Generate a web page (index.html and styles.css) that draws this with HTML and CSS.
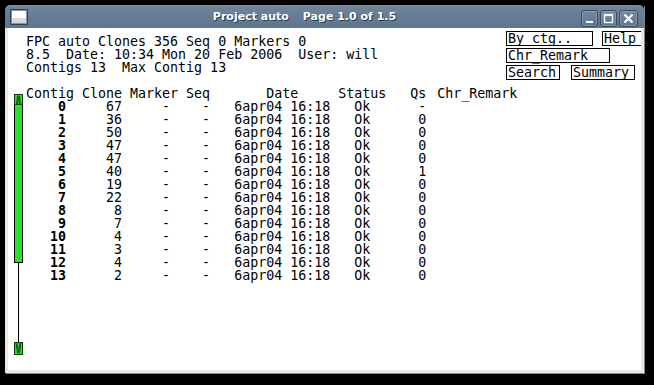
FILE: index.html
```html
<!DOCTYPE html>
<html lang="en">

<head>
    <meta charset="UTF-8">
    <title>Project auto</title>
    <link rel="stylesheet" href="styles.css">
</head>

<body>
    <div class="window">
        <div class="titlebar">
            <span class="win-icon"></span>
            <div class="title">Project auto<span class="gap"></span>Page 1.0 of 1.5</div>
            <div class="win-buttons">
                <span class="wb">
                    <svg width="15" height="15" viewBox="0 0 15 15"><rect x="4" y="10" width="7" height="2" fill="#fff"/></svg>
                </span>
                <span class="wb">
                    <svg width="15" height="15" viewBox="0 0 15 15"><rect x="3.5" y="3.5" width="8" height="8" fill="none" stroke="#fff" stroke-width="1.4"/><rect x="3.5" y="3.5" width="8" height="1.6" fill="#fff"/></svg>
                </span>
                <span class="wb wb-close">
                    <svg width="17" height="15" viewBox="0 0 17 15"><path d="M4.5 3.5 L12.5 11.5 M12.5 3.5 L4.5 11.5" stroke="#fff" stroke-width="2.2"/></svg>
                </span>
            </div>
        </div>
        <div class="frame">
            <div class="client">
                <div class="summary">
                    <div class="info">
                        <div>FPC auto Clones 356 Seq 0 Markers 0</div>
                        <div>8.5  Date: 10:34 Mon 20 Feb 2006  User: will</div>
                        <div>Contigs 13  Max Contig 13</div>
                    </div>
                    <div class="controls">
                        <div class="ctl-row">
                            <span class="ctl w-byctg">By ctg..</span>
                            <span class="ctl w-help">Help</span>
                        </div>
                        <div class="ctl-row">
                            <span class="ctl w-remark">Chr_Remark</span>
                        </div>
                        <div class="ctl-row">
                            <span class="ctl w-search">Search</span>
                            <span class="ctl w-summary">Summary</span>
                        </div>
                    </div>
                </div>

                <div class="listing">
                    <div class="scrollbar">
                        <svg class="sb-arrow" width="9" height="11" viewBox="0 0 9 11">
                            <rect x="0.5" y="0.5" width="8" height="10" fill="#2ee02e" stroke="#0b3d0b"/>
                            <path d="M2.5 10 L3.5 2 L5.5 2 L6.5 10 M3.5 10 L4.5 3 L5.5 10" fill="none" stroke="#0b4a0b" stroke-width="0.9"/>
                        </svg>
                        <div class="sb-thumb"></div>
                        <div class="sb-track"></div>
                        <svg class="sb-arrow" width="9" height="13" viewBox="0 0 9 13">
                            <rect x="0.5" y="0.5" width="8" height="12" fill="#2ee02e" stroke="#0b3d0b"/>
                            <path d="M2 1 L3.5 11 L5.5 11 L7 1 M3 1 L4.5 10 L6 1" fill="none" stroke="#0b4a0b" stroke-width="0.9"/>
                        </svg>
                    </div>

                    <div class="table">
                        <div class="row head">
                            <span>Contig</span><span>Clone</span><span>Marker</span><span>Seq</span><span class="date">Date</span><span>Status</span><span>Qs</span><span class="remark">Chr_Remark</span>
                        </div>
                        <div class="row data"><span class="contig">0</span><span class="clone">67</span><span class="marker">-</span><span class="seq">-</span><span>6apr04 16:18</span><span class="status">Ok</span><span class="qs">-</span><span></span></div>
                        <div class="row data"><span class="contig">1</span><span class="clone">36</span><span class="marker">-</span><span class="seq">-</span><span>6apr04 16:18</span><span class="status">Ok</span><span class="qs">0</span><span></span></div>
                        <div class="row data"><span class="contig">2</span><span class="clone">50</span><span class="marker">-</span><span class="seq">-</span><span>6apr04 16:18</span><span class="status">Ok</span><span class="qs">0</span><span></span></div>
                        <div class="row data"><span class="contig">3</span><span class="clone">47</span><span class="marker">-</span><span class="seq">-</span><span>6apr04 16:18</span><span class="status">Ok</span><span class="qs">0</span><span></span></div>
                        <div class="row data"><span class="contig">4</span><span class="clone">47</span><span class="marker">-</span><span class="seq">-</span><span>6apr04 16:18</span><span class="status">Ok</span><span class="qs">0</span><span></span></div>
                        <div class="row data"><span class="contig">5</span><span class="clone">40</span><span class="marker">-</span><span class="seq">-</span><span>6apr04 16:18</span><span class="status">Ok</span><span class="qs">1</span><span></span></div>
                        <div class="row data"><span class="contig">6</span><span class="clone">19</span><span class="marker">-</span><span class="seq">-</span><span>6apr04 16:18</span><span class="status">Ok</span><span class="qs">0</span><span></span></div>
                        <div class="row data"><span class="contig">7</span><span class="clone">22</span><span class="marker">-</span><span class="seq">-</span><span>6apr04 16:18</span><span class="status">Ok</span><span class="qs">0</span><span></span></div>
                        <div class="row data"><span class="contig">8</span><span class="clone">8</span><span class="marker">-</span><span class="seq">-</span><span>6apr04 16:18</span><span class="status">Ok</span><span class="qs">0</span><span></span></div>
                        <div class="row data"><span class="contig">9</span><span class="clone">7</span><span class="marker">-</span><span class="seq">-</span><span>6apr04 16:18</span><span class="status">Ok</span><span class="qs">0</span><span></span></div>
                        <div class="row data"><span class="contig">10</span><span class="clone">4</span><span class="marker">-</span><span class="seq">-</span><span>6apr04 16:18</span><span class="status">Ok</span><span class="qs">0</span><span></span></div>
                        <div class="row data"><span class="contig">11</span><span class="clone">3</span><span class="marker">-</span><span class="seq">-</span><span>6apr04 16:18</span><span class="status">Ok</span><span class="qs">0</span><span></span></div>
                        <div class="row data"><span class="contig">12</span><span class="clone">4</span><span class="marker">-</span><span class="seq">-</span><span>6apr04 16:18</span><span class="status">Ok</span><span class="qs">0</span><span></span></div>
                        <div class="row data"><span class="contig">13</span><span class="clone">2</span><span class="marker">-</span><span class="seq">-</span><span>6apr04 16:18</span><span class="status">Ok</span><span class="qs">0</span><span></span></div>
                    </div>
                </div>
            </div>
        </div>
    </div>
</body>

</html>
```

FILE: styles.css
```css
body {
    margin: 0;
    background-color: #000;
    height: 385px;
    overflow: hidden;
}

.window {
    margin: 5px 0 0 5px;
    width: 639px;
    height: 368px;
    display: flex;
    flex-direction: column;
    box-shadow: 1px 1px 0 #8a877f;

    .titlebar {
        height: 23px;
        flex: none;
        display: flex;
        align-items: flex-start;
        padding: 0 5px;
        border-radius: 5px 5px 0 0;
        background: linear-gradient(#8099b0 0, #6c859d 2px, #5d758d 100%);
        font-family: "DejaVu Sans", sans-serif;
    }

    .win-icon {
        width: 16px;
        height: 14px;
        margin-top: 4px;
        border: 1px solid #34434f;
        background: linear-gradient(#fff 0, #fff 60%, #d9dde1 60%, #cfd4d9 100%);
        box-shadow: inset 0 0 0 1px #8795a2;
    }

    .title {
        flex: 1;
        text-align: center;
        color: #fff;
        font-size: 11px;
        font-weight: bold;
        line-height: 14px;
        padding-top: 5px;
        text-shadow: 1px 1px 0 #2d3c4a;

        .gap {
            display: inline-block;
            width: 14px;
        }
    }

    .win-buttons {
        display: flex;
        gap: 2px;
        margin-top: 5px;
        margin-right: 1px;
    }

    .wb {
        width: 15px;
        height: 15px;
        display: flex;
        border: 1px solid #3a4d60;
        border-radius: 3px;
        background: linear-gradient(#7189a0, #5f778f);
        box-shadow: inset 0 0 0 1px rgba(255, 255, 255, 0.18);
    }

    .wb-close {
        width: 17px;
    }
}

.frame {
    flex: 1;
    display: flex;
    border: 3px solid #ebe8e2;
    border-top: 0;
}

.client {
    flex: 1;
    background-color: #fff;
    overflow: hidden;
    font-family: "DejaVu Sans Mono", "Liberation Mono", monospace;
    font-size: 13.3px;
    line-height: 13px;
    color: #000;
}

.summary {
    display: flex;
    align-items: flex-start;
    height: 39px;
    padding: 7px 0 0 18px;

    .info div {
        white-space: pre;
        height: 13px;
    }

    .controls {
        margin-left: auto;
        margin-top: -4px;
        width: 135px;
        display: flex;
        flex-direction: column;
        gap: 2px;
    }

    .ctl-row {
        display: flex;
        gap: 9px;
    }

    .ctl {
        height: 13px;
        border: 1px solid #000;
        padding: 0 1px;
        white-space: pre;
        box-sizing: content-box;
        flex: none;
    }

    .w-byctg { width: 83px; }
    .w-help { width: 37px; }
    .w-remark { width: 100px; }
    .w-search { width: 50px; }
    .w-summary { width: 60px; margin-left: 2px; }
}

.listing {
    display: flex;
    margin-top: 13px;
    padding-left: 6px;
    gap: 3px;

    .scrollbar {
        width: 9px;
        height: 261px;
        margin-top: 7px;
        display: flex;
        flex-direction: column;
        flex: none;

        & svg {
            display: block;
        }
    }

    .sb-thumb {
        height: 158px;
        background-color: #2ee02e;
        border: 1px solid #000;
        border-top: 0;
        box-sizing: border-box;
    }

    .sb-track {
        flex: 1;
        background: linear-gradient(to right, transparent 4px, #000 4px, #000 5px, transparent 5px);
    }
}

.table {
    .row {
        display: grid;
        grid-template-columns: 7ch 6ch 7ch 6ch 13ch 9ch 3ch auto;
        height: 13px;

        & span {
            white-space: pre;
        }
    }

    .head .date { padding-left: 4ch; }
    .head .remark { padding-left: 3px; }

    .data .contig {
        text-align: right;
        padding-right: 2ch;
        font-weight: bold;
    }

    .data .clone {
        text-align: right;
        padding-right: 1ch;
    }

    .data .marker { padding-left: 4ch; }
    .data .seq { padding-left: 2ch; }
    .data .status { padding-left: 2ch; }
    .data .qs { padding-left: 1ch; }
}
```
